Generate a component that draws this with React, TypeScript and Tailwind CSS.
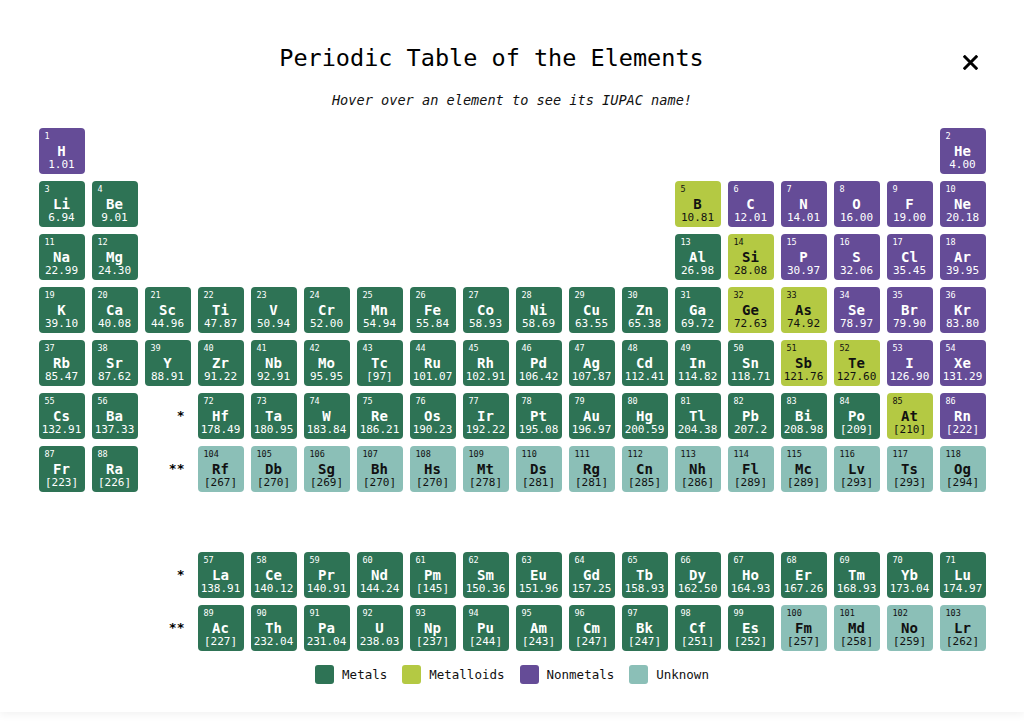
import React from "react";

type Cat = "m" | "ml" | "n" | "u";
type El = [number, string, string, Cat, number, number];

const E: El[] = [
  [1, "H", "1.01", "n", 0, 0],
  [2, "He", "4.00", "n", 0, 17],
  [3, "Li", "6.94", "m", 1, 0],
  [4, "Be", "9.01", "m", 1, 1],
  [5, "B", "10.81", "ml", 1, 12],
  [6, "C", "12.01", "n", 1, 13],
  [7, "N", "14.01", "n", 1, 14],
  [8, "O", "16.00", "n", 1, 15],
  [9, "F", "19.00", "n", 1, 16],
  [10, "Ne", "20.18", "n", 1, 17],
  [11, "Na", "22.99", "m", 2, 0],
  [12, "Mg", "24.30", "m", 2, 1],
  [13, "Al", "26.98", "m", 2, 12],
  [14, "Si", "28.08", "ml", 2, 13],
  [15, "P", "30.97", "n", 2, 14],
  [16, "S", "32.06", "n", 2, 15],
  [17, "Cl", "35.45", "n", 2, 16],
  [18, "Ar", "39.95", "n", 2, 17],
  [19, "K", "39.10", "m", 3, 0],
  [20, "Ca", "40.08", "m", 3, 1],
  [21, "Sc", "44.96", "m", 3, 2],
  [22, "Ti", "47.87", "m", 3, 3],
  [23, "V", "50.94", "m", 3, 4],
  [24, "Cr", "52.00", "m", 3, 5],
  [25, "Mn", "54.94", "m", 3, 6],
  [26, "Fe", "55.84", "m", 3, 7],
  [27, "Co", "58.93", "m", 3, 8],
  [28, "Ni", "58.69", "m", 3, 9],
  [29, "Cu", "63.55", "m", 3, 10],
  [30, "Zn", "65.38", "m", 3, 11],
  [31, "Ga", "69.72", "m", 3, 12],
  [32, "Ge", "72.63", "ml", 3, 13],
  [33, "As", "74.92", "ml", 3, 14],
  [34, "Se", "78.97", "n", 3, 15],
  [35, "Br", "79.90", "n", 3, 16],
  [36, "Kr", "83.80", "n", 3, 17],
  [37, "Rb", "85.47", "m", 4, 0],
  [38, "Sr", "87.62", "m", 4, 1],
  [39, "Y", "88.91", "m", 4, 2],
  [40, "Zr", "91.22", "m", 4, 3],
  [41, "Nb", "92.91", "m", 4, 4],
  [42, "Mo", "95.95", "m", 4, 5],
  [43, "Tc", "[97]", "m", 4, 6],
  [44, "Ru", "101.07", "m", 4, 7],
  [45, "Rh", "102.91", "m", 4, 8],
  [46, "Pd", "106.42", "m", 4, 9],
  [47, "Ag", "107.87", "m", 4, 10],
  [48, "Cd", "112.41", "m", 4, 11],
  [49, "In", "114.82", "m", 4, 12],
  [50, "Sn", "118.71", "m", 4, 13],
  [51, "Sb", "121.76", "ml", 4, 14],
  [52, "Te", "127.60", "ml", 4, 15],
  [53, "I", "126.90", "n", 4, 16],
  [54, "Xe", "131.29", "n", 4, 17],
  [55, "Cs", "132.91", "m", 5, 0],
  [56, "Ba", "137.33", "m", 5, 1],
  [72, "Hf", "178.49", "m", 5, 3],
  [73, "Ta", "180.95", "m", 5, 4],
  [74, "W", "183.84", "m", 5, 5],
  [75, "Re", "186.21", "m", 5, 6],
  [76, "Os", "190.23", "m", 5, 7],
  [77, "Ir", "192.22", "m", 5, 8],
  [78, "Pt", "195.08", "m", 5, 9],
  [79, "Au", "196.97", "m", 5, 10],
  [80, "Hg", "200.59", "m", 5, 11],
  [81, "Tl", "204.38", "m", 5, 12],
  [82, "Pb", "207.2", "m", 5, 13],
  [83, "Bi", "208.98", "m", 5, 14],
  [84, "Po", "[209]", "m", 5, 15],
  [85, "At", "[210]", "ml", 5, 16],
  [86, "Rn", "[222]", "n", 5, 17],
  [87, "Fr", "[223]", "m", 6, 0],
  [88, "Ra", "[226]", "m", 6, 1],
  [104, "Rf", "[267]", "u", 6, 3],
  [105, "Db", "[270]", "u", 6, 4],
  [106, "Sg", "[269]", "u", 6, 5],
  [107, "Bh", "[270]", "u", 6, 6],
  [108, "Hs", "[270]", "u", 6, 7],
  [109, "Mt", "[278]", "u", 6, 8],
  [110, "Ds", "[281]", "u", 6, 9],
  [111, "Rg", "[281]", "u", 6, 10],
  [112, "Cn", "[285]", "u", 6, 11],
  [113, "Nh", "[286]", "u", 6, 12],
  [114, "Fl", "[289]", "u", 6, 13],
  [115, "Mc", "[289]", "u", 6, 14],
  [116, "Lv", "[293]", "u", 6, 15],
  [117, "Ts", "[293]", "u", 6, 16],
  [118, "Og", "[294]", "u", 6, 17],
  [57, "La", "138.91", "m", 8, 3],
  [58, "Ce", "140.12", "m", 8, 4],
  [59, "Pr", "140.91", "m", 8, 5],
  [60, "Nd", "144.24", "m", 8, 6],
  [61, "Pm", "[145]", "m", 8, 7],
  [62, "Sm", "150.36", "m", 8, 8],
  [63, "Eu", "151.96", "m", 8, 9],
  [64, "Gd", "157.25", "m", 8, 10],
  [65, "Tb", "158.93", "m", 8, 11],
  [66, "Dy", "162.50", "m", 8, 12],
  [67, "Ho", "164.93", "m", 8, 13],
  [68, "Er", "167.26", "m", 8, 14],
  [69, "Tm", "168.93", "m", 8, 15],
  [70, "Yb", "173.04", "m", 8, 16],
  [71, "Lu", "174.97", "m", 8, 17],
  [89, "Ac", "[227]", "m", 9, 3],
  [90, "Th", "232.04", "m", 9, 4],
  [91, "Pa", "231.04", "m", 9, 5],
  [92, "U", "238.03", "m", 9, 6],
  [93, "Np", "[237]", "m", 9, 7],
  [94, "Pu", "[244]", "m", 9, 8],
  [95, "Am", "[243]", "m", 9, 9],
  [96, "Cm", "[247]", "m", 9, 10],
  [97, "Bk", "[247]", "m", 9, 11],
  [98, "Cf", "[251]", "m", 9, 12],
  [99, "Es", "[252]", "m", 9, 13],
  [100, "Fm", "[257]", "u", 9, 14],
  [101, "Md", "[258]", "u", 9, 15],
  [102, "No", "[259]", "u", 9, 16],
  [103, "Lr", "[262]", "u", 9, 17],
];

const catClass: Record<Cat, string> = {
  m: "bg-[#2e7355] text-white",
  ml: "bg-[#b4c943] text-[#111111]",
  n: "bg-[#654c97] text-white",
  u: "bg-[#8bbfb7] text-[#111111]",
};

const stars: Record<string, string> = {
  "5-2": "*",
  "6-2": "**",
  "8-2": "*",
  "9-2": "**",
};

const map: Record<string, El> = {};
E.forEach((e) => {
  map[`${e[4]}-${e[5]}`] = e;
});

function Cell({ e }: { e: El }) {
  return (
    <div
      title={e[1]}
      className={`w-[46px] h-[46px] rounded-[4px] flex flex-col pt-[4px] px-[6px] ${catClass[e[3]]}`}
    >
      <div className="text-[8.5px] leading-[8px] text-left">{e[0]}</div>
      <div className="text-[14px] leading-[14px] font-bold text-center mt-[4px]">{e[1]}</div>
      <div className="text-[11px] leading-[11px] text-center whitespace-nowrap -mx-[5px] mt-[1px]">{e[2]}</div>
    </div>
  );
}

const legend: [string, string][] = [
  ["Metals", "bg-[#2e7355]"],
  ["Metalloids", "bg-[#b4c943]"],
  ["Nonmetals", "bg-[#654c97]"],
  ["Unknown", "bg-[#8bbfb7]"],
];

export default function App() {
  const rows = Array.from({ length: 10 }, (_, r) => r);
  const cols = Array.from({ length: 18 }, (_, c) => c);
  return (
    <div
      className="w-[1024px] h-[723px] bg-white text-black overflow-hidden"
      style={{ fontFamily: '"DejaVu Sans Mono", "Liberation Mono", monospace' }}
    >
      <div className="h-[712px] bg-white shadow-[0_3px_8px_rgba(0,0,0,0.05)] flex flex-col items-center">
        <div className="w-[947px] flex items-center pt-[44px]">
          <h1 className="flex-1 text-center text-[23.5px] leading-[28px] font-normal">
            Periodic Table of the Elements
          </h1>
          <button className="w-[41px] h-[28px] flex items-start justify-end pr-[8px]">
            <svg className="mt-[11px]" width="15" height="15" viewBox="0 0 15 15">
              <path d="M1.8 1.8 L13.2 13.2 M13.2 1.8 L1.8 13.2" stroke="#000" strokeWidth="3" strokeLinecap="square" />
            </svg>
          </button>
        </div>
        <p className="mt-[19px] text-[13.6px] leading-[18px] italic text-[#111]">
          Hover over an element to see its IUPAC name!
        </p>
        <div className="mt-[19px] grid grid-cols-[repeat(18,46px)] grid-rows-[repeat(10,46px)] gap-[7px]">
          {rows.map((r) =>
            cols.map((c) => {
              const key = `${r}-${c}`;
              const e = map[key];
              if (e) return <Cell key={key} e={e} />;
              if (stars[key])
                return (
                  <div key={key} className="w-[46px] h-[46px] flex items-center justify-end pr-[6px] text-[13px] font-bold">
                    {stars[key]}
                  </div>
                );
              return <div key={key} className="w-[46px] h-[46px]" />;
            })
          )}
        </div>
        <div className="mt-[14px] flex items-center gap-[15px]">
          {legend.map(([label, cls]) => (
            <div key={label} className="flex items-center gap-[8px]">
              <div className={`w-[19px] h-[19px] rounded-[3px] ${cls}`} />
              <span className="text-[12.5px] leading-[19px] text-[#111]">{label}</span>
            </div>
          ))}
        </div>
      </div>
    </div>
  );
}
